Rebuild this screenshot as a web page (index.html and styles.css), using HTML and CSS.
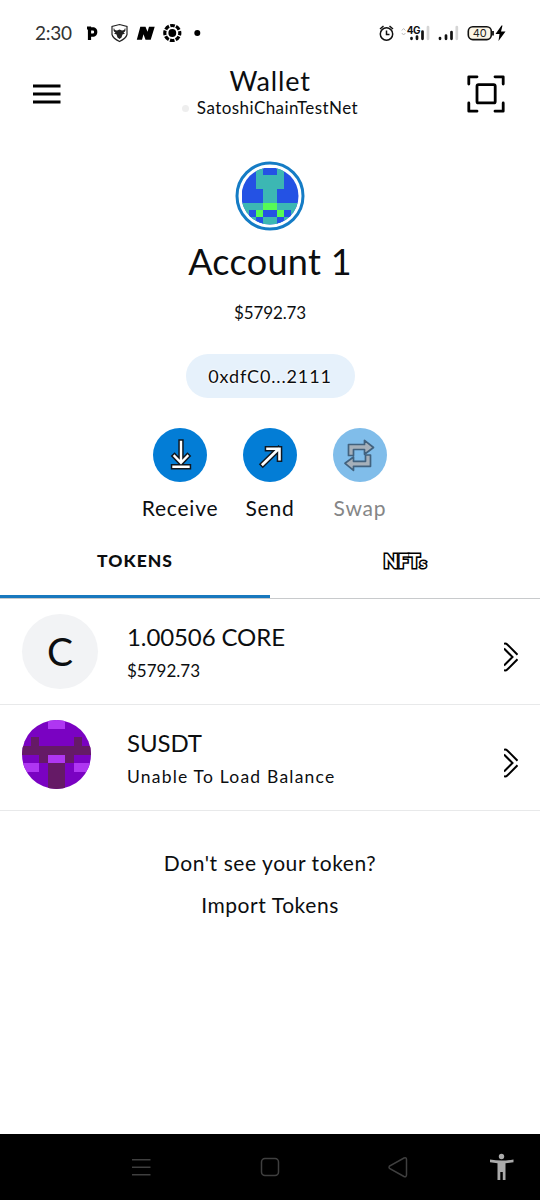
FILE: index.html
```html
<!DOCTYPE html>
<html lang="en">
<head>
<meta charset="utf-8">
<title>Wallet</title>
<link rel="stylesheet" href="styles.css">
</head>
<body>
<div class="screen">
  <div class="status">
    <span class="clock">2:30</span>
    <svg class="status-left" width="124" height="24" viewBox="84 21 124 24">
      <path d="M89.500 40V26.500M87 28h3M90 28.800h3.500a3.400 3.400 0 0 1 0 6.400H90" fill="none" stroke="#000" stroke-width="3.200"/>
      <path d="M119.500 24.500l7.500 2v8q-1 4-7.500 7q-6.500-3-7.500-7v-8z" fill="#fff" stroke="#222" stroke-width="1.200"/>
      <path d="M114 27.500q0 3 3 3l2.500-1 2.500 1q3 0 3-3 1.500 4-1.500 5l1.500 1-2.500 1-1 3-2 1.500-2-1.500-1-3-2.500-1 1.500-1q-3-1-1.500-5z" fill="#222"/>
      <path d="M136.800 39.800l3.500-13h5.200l2 5 1.500-5h5.700l-4 13h-5.200l-2-5.500-1.500 5.500z"/>
      <circle cx="172.300" cy="33" r="3.900"/>
      <circle cx="172.300" cy="33" r="7.500" fill="none" stroke="#000" stroke-width="3.200" stroke-dasharray="4.600 1.290" stroke-dashoffset="2.300"/>
      <circle cx="197.300" cy="33" r="3"/>
    </svg>
    <svg class="status-right" width="132" height="28" viewBox="378 19 132 28">
      <g fill="none" stroke="#111" stroke-width="1.500"><circle cx="386.500" cy="34" r="6.200"/><path d="M386.500 30.500v4h3M380 29l3.500-3M393 29l-3.500-3"/></g>
      <path d="M401.800 30.500l1.800-2 1.800 2M401.800 33l1.800 2 1.800-2" fill="none" stroke="#bbb"/>
      <text x="406.800" y="34" class="net">4G</text>
      <g stroke="#111" stroke-width="2.700" stroke-linecap="round">
        <path d="M411.500 38.200v.600M417 36.500v2.300M422.500 31.500v7.300M440 38v.800M446 35.500v3.300M451.500 32v6.800"/>
        <path d="M428 27v11.800M456.800 27v11.800" stroke="#d5d5d5"/>
      </g>
      <rect x="468.300" y="26.800" width="23" height="12.800" rx="4.500" fill="#fbf5e6" stroke="#111" stroke-width="1.600"/>
      <path d="M493 31v4.500" stroke="#111" stroke-width="1.800"/>
      <text x="479.800" y="37" class="batt">40</text>
      <path d="M501.500 25.500l-6 8.500h4l-1 7 7-9.500h-4.500l1.500-6z"/>
    </svg>
  </div>

  <header class="header">
    <svg width="28" height="20" viewBox="0 0 28 20"><path d="M0 2h27.500M0 10h27.500M0 18h27.500" stroke="#000" stroke-width="3"/></svg>
    <div class="heading">
      <div class="title">Wallet</div>
      <div class="network"><i class="dot"></i><span>SatoshiChainTestNet</span></div>
    </div>
    <svg width="38" height="38" viewBox="0 0 38 38" fill="none" stroke="#000" stroke-width="2.800" stroke-linejoin="round" stroke-linecap="round">
      <path d="M1.800 9V1.800H10M28 1.800h8.200V9M36.200 28v8.200H28M10 36.200H1.800V28"/><rect x="10" y="9.700" width="18.200" height="18.200" rx="1.500"/>
    </svg>
  </header>

  <section class="account">
    <svg width="70" height="70" viewBox="0 0 70 70">
      <defs><clipPath id="face"><circle cx="35" cy="35" r="28.500"/></clipPath></defs>
      <circle cx="35" cy="35" r="33" fill="#fff" stroke="#157cc5" stroke-width="3"/>
      <g clip-path="url(#face)"><g transform="translate(6.500 6.500) scale(7.125)" shape-rendering="crispEdges">
        <path fill="#2452e4" d="M0 0h8v8H0z"/>
        <path fill="#3cb7b3" d="M2 0h1v1h2V0h1v3H5v2h3v3H7V7H6v1H5V7H3v1H2V7H1v1H0V5h3V3H2z"/>
        <path fill="#2452e4" d="M1 6h6v1H1zM2 7h1v1H2zM5 7h1v1H5z"/>
        <path fill="#3cb7b3" d="M1 7h1v1H1zM6 7h1v1H6zM3 7h2v1H3z"/>
        <path fill="#56fb55" d="M3 5h2v1H3zM2 6h1v1H2zM5 6h1v1H5z"/>
      </g></g>
    </svg>
    <div class="name">Account 1</div>
    <div class="fiat">$5792.73</div>
    <div class="address">0xdfC0...2111</div>
    <div class="actions">
      <div class="action"><div class="round"><svg width="54" height="54" viewBox="0 0 54 54" fill="none" stroke-linecap="square">
        <path d="M28 14v19M21.500 28l6.500 6.800 6.500-6.800M20.500 38.800h15" stroke="#101820" stroke-width="5.400"/>
        <path d="M28 14v19M21.500 28l6.500 6.800 6.500-6.800M20.500 38.800h15" stroke="#fff" stroke-width="2.400"/></svg></div><span>Receive</span></div>
      <div class="action"><div class="round"><svg width="54" height="54" viewBox="0 0 54 54" fill="none" stroke-linecap="square">
        <path d="M19.800 36.300L35.500 21M24.500 20.800h12v10.500" stroke="#101820" stroke-width="5.600"/>
        <path d="M19.800 36.300L35.500 21M24.500 20.800h12v10.500" stroke="#fff" stroke-width="2.600"/></svg></div><span>Send</span></div>
      <div class="action off"><div class="round"><svg width="54" height="54" viewBox="0 0 54 54" fill="#a6b0ba" stroke="#42627e" stroke-width="1.700" stroke-linejoin="round">
        <path d="M15.500 27.500V16.500H31.500V12.300L40.500 19.500 31.500 26.300V21.500H20.500V27.500z"/>
        <path d="M37.500 27V38.300H20.500V42.300L12 35.300 20.500 29V33.300H32.500V27z"/></svg></div><span>Swap</span></div>
    </div>
  </section>

  <nav class="tabs">
    <div class="tab active"><span>TOKENS</span></div>
    <div class="tab nft"><span>NFT<small>s</small></span></div>
  </nav>

  <div class="token">
    <div class="coin">C</div>
    <div class="info"><div class="amount">1.00506 CORE</div><div class="sub">$5792.73</div></div>
    <svg class="chevron" width="14" height="30" viewBox="0 0 14 30" fill="none" stroke="#000" stroke-width="2"><path d="M0 1.700q2-.500 3 .500L13.500 12.700M0 6.500L8.500 15 0 23.500M0 28.300q2 .500 3-.500L13.500 17.300"/></svg>
  </div>
  <div class="token">
    <div class="coin-slot"><svg width="69" height="69" viewBox="0 0 69 69">
      <defs><clipPath id="coin"><circle cx="34.500" cy="34.500" r="34.500"/></clipPath></defs>
      <g clip-path="url(#coin)"><g transform="scale(8.625)" shape-rendering="crispEdges">
        <path fill="#7a02c2" d="M0 0h8v8H0z"/>
        <path fill="#651a66" d="M1 2h1v1h4V2h1v1h1v1H6v1H2V4H0V3h1zM3 5h2v3H3z"/>
        <path fill="#af36f2" d="M3 0h2v1H3zM3 4h2v1H3zM0 5h2v1H0zM6 5h2v1H6z"/>
      </g></g>
    </svg></div>
    <div class="info"><div class="amount">SUSDT</div><div class="sub unable">Unable To Load Balance</div></div>
    <svg class="chevron" width="14" height="30" viewBox="0 0 14 30" fill="none" stroke="#000" stroke-width="2"><path d="M0 1.700q2-.500 3 .500L13.500 12.700M0 6.500L8.500 15 0 23.500M0 28.300q2 .500 3-.500L13.500 17.300"/></svg>
  </div>

  <div class="more"><div>Don't see your token?</div><div class="import">Import Tokens</div></div>

  <footer class="navbar">
    <svg width="540" height="66" viewBox="0 0 540 66" fill="none" stroke="#3f3f3f" stroke-width="1.500">
      <path d="M132 25.800h18.500M132 33.300h18.500M132 40.800h18.500"/>
      <rect x="261.500" y="24.500" width="17" height="17" rx="3.500"/>
      <path d="M389.500 32q-1 1.300 0 2.500l14.500 8q2.300.800 2.500-1.500V25.500q-.200-2.300-2.500-1.500z"/>
      <g fill="#aaa" stroke="none"><circle cx="501.500" cy="22.500" r="2.700"/><path d="M490 25.500q11.500 2 23.500 0v2.700l-8 1V46h-2.700v-8h-2.500v8h-2.800V29.200l-7.500-1z"/></g>
    </svg>
  </footer>
</div>
</body>
</html>
```
FILE: styles.css
```css
* { box-sizing: border-box; }
body { margin: 0; background: #fff; color: #0c0e10; font-family: Lato, "Open Sans", sans-serif; }
svg { display: block; flex: none; }
.screen { width: 540px; height: 1200px; display: flex; flex-direction: column; white-space: nowrap; }
.status { height: 66px; padding: 0 30px 0 35px; display: flex; align-items: center; }
.clock { width: 49px; font-size: 19px; line-height: 24px; letter-spacing: -.3px; color: #333; }
.status-right { margin-left: auto; }
.net { font: 700 10px Inter, sans-serif; fill: #111; letter-spacing: -.5px; }
.batt { font: 11px Inter, sans-serif; text-anchor: middle; fill: #222; }
.header { height: 58px; padding: 0 35px 3px 33px; display: flex; align-items: center; }
.heading { flex: 1; display: flex; flex-direction: column; align-items: center; padding-left: 12px; }
.title { font-size: 27px; line-height: 29px; letter-spacing: .8px; }
.network { display: flex; align-items: center; gap: 8px; font-size: 17px; line-height: 26px; letter-spacing: .45px; }
.dot { width: 7px; height: 7px; border-radius: 50%; background: #eee; }
.account { height: 408px; padding-top: 37px; display: flex; flex-direction: column; align-items: center; }
.name { margin-top: 7px; font-size: 36px; line-height: 46px; letter-spacing: .3px; }
.fiat { margin-top: 17px; font-size: 17px; line-height: 24px; letter-spacing: -.1px; }
.address { margin-top: 29px; width: 169px; height: 44px; border-radius: 22px; background: #e6f1fb; text-align: center; font-size: 18px; line-height: 44px; letter-spacing: .85px; text-shadow: 0 0 2px #fff, 0 0 2px #fff, 0 0 3px #fff; }
.actions { margin-top: 30px; display: flex; gap: 36px; }
.action { width: 54px; display: flex; flex-direction: column; align-items: center; font-size: 21px; line-height: 26px; letter-spacing: .8px; gap: 13px; }
.round { width: 54px; height: 54px; border-radius: 50%; background: #037dd6; }
.off .round { background: #80bdea; }
.off { color: #858687; }
.tabs { height: 67px; display: flex; border-bottom: 1px solid #c8cacc; }
.tab { width: 270px; height: 66px; padding-top: 16px; text-align: center; font-weight: 900; font-size: 17.5px; line-height: 26px; letter-spacing: 1px; }
.active { border-bottom: 3px solid #1878be; }
.nft { color: #fff; letter-spacing: .1px; font-size: 18.5px; -webkit-text-stroke: 3.2px #000; paint-order: stroke fill; }
.nft small { font-size: 14px; }
.token { height: 106px; padding: 15px 22px 0; display: flex; border-bottom: 1px solid #e8e9ea; }
.coin { width: 76px; height: 75px; border-radius: 50%; background: #f2f3f5; font-size: 39px; line-height: 75px; text-align: center; }
.coin-slot { width: 76px; }
.info { margin-left: 29px; }
.amount { font-size: 24px; line-height: 46px; letter-spacing: -.1px; }
.sub { font-size: 17px; line-height: 22px; }
.unable { font-size: 17.5px; letter-spacing: 1.2px; }
.chevron { margin: 28px 0 0 auto; }
.more { flex: 1; padding-top: 36px; text-align: center; font-size: 21px; line-height: 32px; letter-spacing: .57px; }
.import { margin-top: 10px; }
.navbar { height: 66px; background: #000; }
```
